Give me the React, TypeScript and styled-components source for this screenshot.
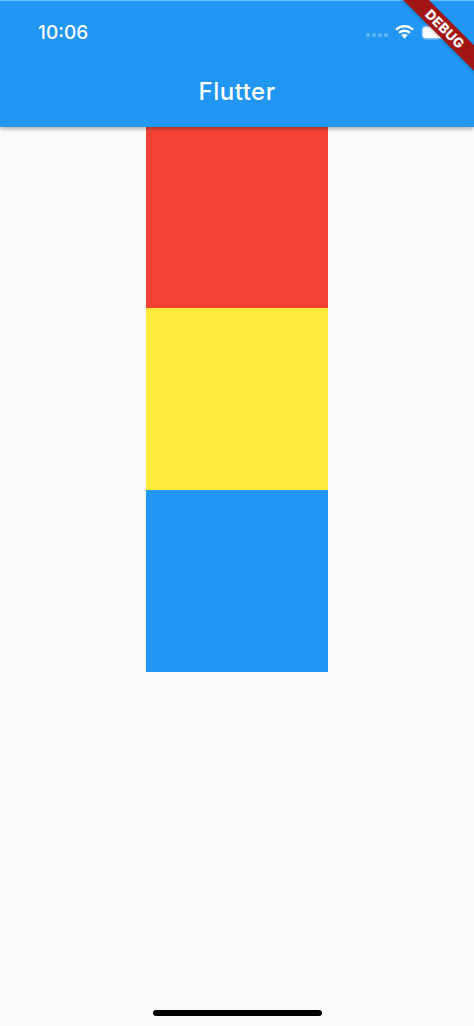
import React from "react";
import styled, { createGlobalStyle } from "styled-components";

const GlobalStyle = createGlobalStyle`
  html, body {
    margin: 0;
    padding: 0;
    background: #fafafa;
  }
`;

const Page = styled.div`
  position: relative;
  width: 474px;
  height: 1026px;
  overflow: hidden;
  background: #fafafa;
  font-family: Inter, "Liberation Sans", sans-serif;
  display: flex;
  flex-direction: column;
  align-items: center;
`;

const AppBar = styled.header`
  position: relative;
  z-index: 1;
  align-self: stretch;
  height: 127px;
  margin-bottom: -0.6px;
  flex: none;
  box-sizing: border-box;
  background: #2196f3;
  border-top: 1px solid #6cbcf7;
  box-shadow: 0 2px 4px rgba(0, 0, 0, 0.3);
  color: #fff;
  display: flex;
  flex-direction: column;
`;

const StatusBar = styled.div`
  height: 59px;
  flex: none;
  box-sizing: border-box;
  padding: 3px 27px 0 38px;
  display: flex;
  align-items: center;
  justify-content: space-between;
`;

const Time = styled.span`
  font-size: 19px;
  font-weight: 500;
`;

const StatusIcons = styled.div`
  display: flex;
  align-items: center;
`;

const Signal = styled.div`
  display: flex;
  gap: 2px;
  margin: 5px 6px 0 0;
`;

const SignalDot = styled.span`
  width: 4px;
  height: 4px;
  border-radius: 50%;
  background: #63b6f6;
`;

const Battery = styled.div`
  width: 24px;
  height: 11px;
  margin-left: 8px;
  border-radius: 3px;
  background: #fff;
  box-shadow: 0 0 0 1.5px rgba(255, 255, 255, 0.45);
`;

const Title = styled.h1`
  margin: 16px 0 0;
  font-size: 24px;
  font-weight: 500;
  line-height: 32px;
  text-align: center;
  letter-spacing: 0.5px;
`;

const Square = styled.div<{ $color: string }>`
  width: 182px;
  height: 182px;
  flex: none;
  background: ${(p) => p.$color};
`;

const DebugBanner = styled.div`
  position: absolute;
  z-index: 2;
  top: 20px;
  right: -31px;
  width: 120px;
  height: 18px;
  line-height: 19px;
  transform: rotate(45deg);
  background: #a31515;
  box-shadow: 0 1px 3px rgba(0, 0, 0, 0.25);
  color: #fff;
  font-size: 13.5px;
  font-weight: 800;
  letter-spacing: 0.4px;
  text-align: center;
`;

const HomeIndicator = styled.div`
  position: absolute;
  z-index: 2;
  left: 153px;
  bottom: 10px;
  width: 169px;
  height: 6px;
  border-radius: 3px;
  background: #000;
`;

const WifiIcon = () => (
  <svg width="21" height="16" viewBox="0 0 20 15" fill="#fff">
    <path d="M10 3.2c2.8 0 5.3 1.1 7.2 2.9l1.6-1.7C16.5 2.2 13.4.8 10 .8S3.5 2.2 1.2 4.4l1.6 1.7C4.700 4.300 7.200 3.200 10 3.200z" />
    <path d="M10 7.400c1.700 0 3.200.7 4.300 1.700l1.600-1.700C14.400 6 12.300 5 10 5S5.600 6 4.100 7.400l1.600 1.700C6.800 8.100 8.300 7.400 10 7.400z" />
    <path d="M10 9.300c-1.200 0-2.200.5-3 1.200l3 3.300 3-3.300c-.8-.7-1.800-1.200-3-1.200z" />
  </svg>
);

export default function App() {
  return (
    <Page>
      <GlobalStyle />
      <AppBar>
        <StatusBar>
          <Time>10:06</Time>
          <StatusIcons>
            <Signal>
              <SignalDot />
              <SignalDot />
              <SignalDot />
              <SignalDot />
            </Signal>
            <WifiIcon />
            <Battery />
          </StatusIcons>
        </StatusBar>
        <Title>Flutter</Title>
      </AppBar>
      <Square $color="#f44336" />
      <Square $color="#ffeb3b" />
      <Square $color="#2196f3" />
      <DebugBanner>DEBUG</DebugBanner>
      <HomeIndicator />
    </Page>
  );
}
